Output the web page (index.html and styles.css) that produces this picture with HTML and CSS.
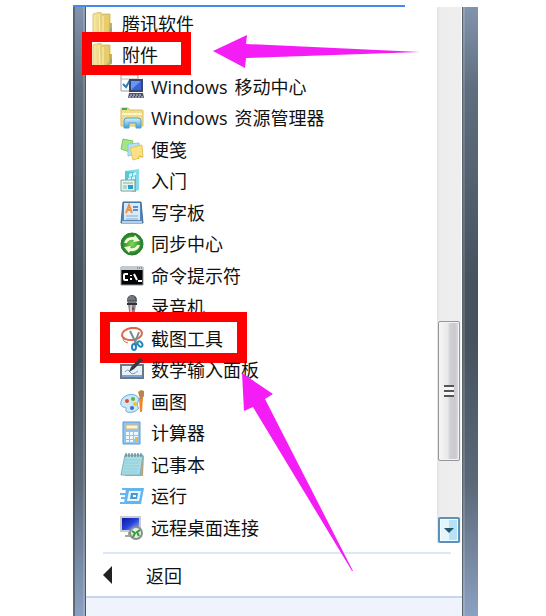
FILE: index.html
```html
<!DOCTYPE html>
<html lang="zh-CN">
<head>
    <meta charset="UTF-8">
    <meta name="viewport" content="width=device-width, initial-scale=1.0">
    <title>附件</title>
    <link rel="stylesheet" href="styles.css">
</head>
<body>
    <svg class="defs" aria-hidden="true">
        <defs>
            <linearGradient id="gold"><stop offset="0" stop-color="#f8eaa6"/><stop offset="1" stop-color="#d3b04a"/></linearGradient>
            <linearGradient id="screen" x2="1" y2="1"><stop offset="0" stop-color="#0a13a0"/><stop offset=".5" stop-color="#2540d8"/><stop offset="1" stop-color="#a9c4fa"/></linearGradient>
            <linearGradient id="sky" x2="0" y2="1"><stop offset="0" stop-color="#d8f2fc"/><stop offset="1" stop-color="#3a9fce"/></linearGradient>
            <radialGradient id="green"><stop offset="0" stop-color="#7bdc52"/><stop offset="1" stop-color="#1d7a24"/></radialGradient>
            <symbol id="folder" viewBox="0 0 24 24">
                <path d="M2 2l8-2v2h9v18l-7 4-10-2z" fill="url(#gold)" stroke="#dcc573"/>
                <path d="M11 3h7v16l-7 5z" fill="#e6cc6c"/>
                <path d="M8 2l1 20M12 4v18" stroke="#fff3b8" fill="none"/>
                <path d="M18 11h3v10l-6 2 3-4z" fill="#cfae44"/>
                <path d="M20 16v4" stroke="#52a7ba"/>
            </symbol>
        </defs>
    </svg>

    <div class="window">
        <div class="top-line"></div>
        <div class="side side-left"></div>
        <main class="menu">
            <div class="programs">
                <ul class="list">
                    <li class="folder">
                        <a href="#"><svg class="icon" viewBox="0 0 24 24"><use href="#folder"/></svg>腾讯软件</a>
                    </li>
                    <li class="folder">
                        <a href="#"><svg class="icon" viewBox="0 0 24 24"><use href="#folder"/></svg>附件</a>
                        <span class="mark mark-folder"></span>
                        <svg class="arrow arrow-folder" viewBox="0 0 207 33"><path d="M0 16L34 0l-1 9 174 8-174 6-1 10z"/></svg>
                    </li>
                    <li>
                        <a href="#"><svg class="icon" viewBox="0 0 24 24">
                            <path d="M1 0h17v16H1z" fill="#fff" stroke="#9aa0a6"/>
                            <path d="M1 4h17" stroke="#bbb"/>
                            <path d="M3 9l3 3 4-7" fill="none" stroke="#2b80b5" stroke-width="2"/>
                            <path d="M10 5h12v11H10z" fill="#6796f5" stroke="#38456e" stroke-width="2"/>
                            <path d="M11 15L21 6v9z" fill="#3863e0"/>
                            <path d="M9 18h14l1 5H8z" fill="#4a5268"/>
                            <path d="M10 20h12M9 22h14" stroke="#d4d8e4" stroke-dasharray="2 1"/>
                        </svg><span>Windows</span> 移动中心</a>
                    </li>
                    <li>
                        <a href="#"><svg class="icon" viewBox="0 0 24 24">
                            <path d="M1 3q0-1 1-1h6l2 2h12q1 0 1 1v15H1z" fill="#f1dc8c" stroke="#d7bd67"/>
                            <path d="M2 3h5" stroke="#50a847" stroke-width="2"/>
                            <path d="M2 8h20" stroke="#fff5c5" stroke-width="2"/>
                            <path d="M4 22V15q0-3 3-3h11q3 0 3 3v7h-5v-5H9v5z" fill="url(#sky)" stroke="#4fa3cb"/>
                        </svg><span>Windows</span> 资源管理器</a>
                    </li>
                    <li>
                        <a href="#"><svg class="icon" viewBox="0 0 24 24">
                            <path d="M3 1l10 2-3 11-9-3z" fill="#a4e58a" stroke="#7bca65"/>
                            <path d="M8 6l11-1 1 10-12 3z" fill="#b3e2f7" stroke="#86c5e6"/>
                            <path d="M10 10l12-3 1 12-10 3z" fill="#fae184" stroke="#e6c45b"/>
                            <path d="M18 21l1-3 4 1" fill="#fff2b6" stroke="#deb94c"/>
                        </svg>便笺</a>
                    </li>
                    <li>
                        <a href="#"><svg class="icon" viewBox="0 0 24 24">
                            <path d="M5 2l14-2v21l-6 2-8-3z" fill="#84dcea"/>
                            <path d="M5 2l11 1v20l-11-3z" fill="#58c7d9"/>
                            <path d="M9 5l3-1v3l-3 1zm4-1l3-1v3l-3 1zM8 9l3-1v3l-3 1zm4-1l3-1v3l-3 1z" fill="#d2f7fa"/>
                            <path d="M1 11h14v11H1z" fill="#e8f2ee" stroke="#76a69f"/>
                            <path d="M3 14h10M3 17h4M3 19h4" stroke="#80b89f"/>
                            <path d="M8 16h5v4H8z" fill="#23a1cf"/>
                        </svg>入门</a>
                    </li>
                    <li>
                        <a href="#"><svg class="icon" viewBox="0 0 24 24">
                            <path d="M3 1h18l2 21H1z" fill="#5587b8" stroke="#3d699a"/>
                            <path d="M4 2h16v17H4z" fill="#d7e9fa"/>
                            <path d="M6 12l3-8 3 8M7 9h4" fill="none" stroke="#f09137" stroke-width="2"/>
                            <path d="M13 6h5M13 9h5" stroke="#5b8fd1" stroke-width="2"/>
                            <path d="M6 15h12M6 18h12" stroke="#8da9c8"/>
                            <path d="M2 20h20v2H2z" fill="#b7d0e8"/>
                        </svg>写字板</a>
                    </li>
                    <li>
                        <a href="#"><svg class="icon" viewBox="0 0 24 24">
                            <circle cx="12" cy="12" r="11" fill="url(#green)" stroke="#297d32"/>
                            <path d="M4 11q2-7 10-6l1-2 5 6-7 1 1-2q-5-1-7 3z" fill="#f4fbdc"/>
                            <path d="M20 13q-2 7-10 6l-1 2-5-6 7-1-1 2q5 1 7-3z" fill="#f4fbdc"/>
                        </svg>同步中心</a>
                    </li>
                    <li>
                        <a href="#"><svg class="icon" viewBox="0 0 24 24">
                            <path d="M1 3h22v18H1z" fill="#050505" stroke="#8b949e"/>
                            <path d="M1 3h22v3H1z" fill="#bfcbd5"/>
                            <path d="M17 4h1m1 0h1m1 0h1" stroke="#4b5964"/>
                            <path d="M8 10H5q-1 0-1 1v4q0 1 1 1h3M11 11v1m0 2v2M14 10l3 6M18 17h4" fill="none" stroke="#fff" stroke-width="2"/>
                        </svg>命令提示符</a>
                    </li>
                    <li>
                        <a href="#"><svg class="icon" viewBox="0 0 24 24">
                            <path d="M8 9h8l-2 15h-4z" fill="#878b8f"/>
                            <path d="M10 9h2v15h-2z" fill="#c7c9cb"/>
                            <ellipse cx="12" cy="5" rx="5" ry="5" fill="#54585d"/>
                            <path d="M8 4h7M9 2h5M8 7h8" stroke="#93979c"/>
                            <path d="M7 9h10" stroke="#303438" stroke-width="2"/>
                            <path d="M13 12v3" stroke="#e22b22" stroke-width="2"/>
                        </svg>录音机</a>
                    </li>
                    <li>
                        <a href="#"><svg class="icon" viewBox="0 0 24 24">
                            <ellipse cx="12" cy="7" rx="10" ry="6" fill="none" stroke="#df6744" stroke-width="2" transform="rotate(-8 12 7)"/>
                            <path d="M4 10q-3 4 4 6" fill="none" stroke="#df6744"/>
                            <path d="M10 4l7 14M19 5l-5 13" stroke="#7c8a94" stroke-width="2"/>
                            <ellipse cx="14" cy="20" rx="2" ry="3" fill="none" stroke="#2585bd" stroke-width="2"/>
                            <ellipse cx="20" cy="17" rx="2" ry="3" fill="none" stroke="#2585bd" stroke-width="2" transform="rotate(-35 20 17)"/>
                        </svg>截图工具</a>
                        <span class="mark mark-tool"></span>
                        <svg class="arrow arrow-tool" viewBox="0 0 112 199"><path d="M0 0l31 21-8 5 88 172h-1L11 34l-9 4z"/></svg>
                    </li>
                    <li>
                        <a href="#"><svg class="icon" viewBox="0 0 24 24">
                            <path d="M1 7h22v13H1z" fill="#e9f1f8" stroke="#6c7885" stroke-width="2"/>
                            <path d="M2 18h20" stroke="#7aa5d0" stroke-width="2"/>
                            <path d="M5 14q3-4 5 0t8-1" fill="none" stroke="#8798a9"/>
                            <path d="M9 14l2-5 9-9 3 2-9 9z" fill="#333c45"/>
                        </svg>数学输入面板</a>
                    </li>
                    <li>
                        <a href="#"><svg class="icon" viewBox="0 0 24 24">
                            <path d="M2 9q5-6 13-4 5 2 3 7t1 6q-5 6-12 4-2-1-1-3t-3-2q-4-2-1-8z" fill="#cce7f8" stroke="#6faed7"/>
                            <circle cx="7" cy="11" r="2" fill="#e24b2b"/>
                            <circle cx="13" cy="9" r="2" fill="#58b83e"/>
                            <circle cx="15" cy="14" r="2" fill="#f2c22d"/>
                            <circle cx="12" cy="18" r="2" fill="#346fc4"/>
                            <path d="M19 8h4l-1 14h-2z" fill="#ee8827"/>
                            <path d="M18 2l3-2 3 1v5l-2 3h-2z" fill="#bd8450"/>
                        </svg>画图</a>
                    </li>
                    <li>
                        <a href="#"><svg class="icon" viewBox="0 0 24 24">
                            <path d="M3 1h17v22H3z" fill="#8fc5ee" stroke="#5c9acb"/>
                            <path d="M6 4h12v4H6z" fill="#fbf3df" stroke="#e8ae67"/>
                            <path d="M6 11h3v3H6zm4 0h3v3h-3zm4 0h4v3h-4zM6 15h3v3H6zm4 0h3v3h-3zm4 0h4v3h-4zM6 19h3v2H6zm4 0h3v2h-3z" fill="#edf8ff"/>
                            <path d="M15 16h3v5h-3z" fill="#f5ae50"/>
                        </svg>计算器</a>
                    </li>
                    <li>
                        <a href="#"><svg class="icon" viewBox="0 0 24 24">
                            <path d="M7 3h17l-1 20H5z" fill="#bba77c"/>
                            <path d="M5 2h18l-3 20H1z" fill="#a7dce5" stroke="#75b4c2"/>
                            <path d="M5 7h15M5 10h14M4 13h15M4 16h14M3 19h14" stroke="#93cdd9"/>
                            <path d="M6 0v4m3-4v4m3-4v4m3-4v4m3-4v4m3-4v4" stroke="#596971"/>
                        </svg>记事本</a>
                    </li>
                    <li>
                        <a href="#"><svg class="icon" viewBox="0 0 24 24">
                            <path d="M6 4h18l-3 16H4z" fill="#62b5f3"/>
                            <path d="M9 7h12l-2 10H7z" fill="#e9f7ff"/>
                            <path d="M11 9h7l-1 6h-7z" fill="#4799df"/>
                            <path d="M13 11h3v2h-3z" fill="#fff"/>
                            <path d="M2 5h5M0 10h6M1 14h5M0 19h5" stroke="#65b6f2" stroke-width="2"/>
                        </svg>运行</a>
                    </li>
                    <li>
                        <a href="#"><svg class="icon" viewBox="0 0 24 24">
                            <path d="M1 1h19v14H1z" fill="url(#screen)" stroke="#c9cdd1" stroke-width="2"/>
                            <path d="M8 16h6v3H8zM5 19h11v2H5z" fill="#a5a9ae"/>
                            <circle cx="16" cy="17" r="6" fill="#e8e9e8" stroke="#8b8f8f" stroke-width="2"/>
                            <path d="M12 15l3 2-2 4M20 14l-3 2 2 4" fill="none" stroke="#28a32b" stroke-width="2"/>
                        </svg>远程桌面连接</a>
                    </li>
                </ul>
                <div class="scrollbar">
                    <div class="thumb"><span class="grip"></span></div>
                    <button class="scroll-down" aria-label="向下滚动"></button>
                </div>
            </div>
            <button class="back"><span class="back-arrow"></span>返回</button>
            <div class="footer"></div>
        </main>
        <div class="side side-right"></div>
    </div>
</body>
</html>
```

FILE: styles.css
```css
* {
    box-sizing: border-box;
}
body {
    margin: 0;
    background: #fff;
    color: #111;
    font-family: "Open Sans", "Noto Sans CJK SC", sans-serif;
    font-size: 18px;
}
.defs {
    position: absolute;
    width: 0;
    height: 0;
}
.window {
    display: grid;
    grid-template-columns: 13px 1fr 16px;
    grid-template-rows: auto 1fr;
    min-height: 100vh;
    padding: 5px 68px 0 73px;
}
.top-line {
    grid-column: 1 / -1;
    width: 82%;
    height: 2px;
    background: #438be9;
}
.side {
    background: linear-gradient(#8294ad, #5f6f80 13%, #46525e 45%, #46525e 55%, #5a6878 78%, #8ba1c2);
}
.side-left {
    border-left: 2px solid rgba(50, 60, 70, 0.5);
    border-right: 1px solid #4d5762;
    box-shadow: inset -2px 0 rgba(255, 255, 255, 0.15);
}
.side-right {
    border-left: 1px solid #59636b;
    box-shadow: inset 2px 0 rgba(255, 255, 255, 0.15);
}
.menu {
    display: flex;
    flex-direction: column;
    min-width: 0;
}
.programs {
    display: flex;
}
.list {
    flex: 1;
    margin: 0;
    padding: 1px 0 0;
    list-style: none;
}
.list li {
    position: relative;
    height: 31px;
    padding-left: 34px;
}
.list li:nth-child(even) {
    height: 32px;
}
.list li.folder {
    padding-left: 5px;
}
.list a {
    display: flex;
    align-items: center;
    gap: 7px;
    height: 100%;
    color: inherit;
    line-height: 24px;
    text-decoration: none;
    white-space: nowrap;
}
.icon {
    flex: none;
    width: 24px;
    height: 24px;
}

/* highlights over the list */
.mark {
    position: absolute;
    border: 10px solid #fe0000;
}
.mark-folder {
    left: -4px;
    top: -7px;
    width: 109px;
    height: 43px;
}
.mark-tool {
    left: 14px;
    top: -11px;
    width: 147px;
    height: 51px;
}
.arrow {
    position: absolute;
    z-index: 1;
    fill: #f51df5;
}
.arrow-folder {
    left: 127px;
    top: -4px;
    width: 207px;
    height: 33px;
}
.arrow-tool {
    left: 156px;
    top: 50px;
    width: 112px;
    height: 199px;
}

.scrollbar {
    display: grid;
    grid-template-rows: 314fr 140px 56fr 26px;
    width: 24px;
    margin-right: 1px;
    padding: 0 1px;
    background: linear-gradient(90deg, #e4e4e4, #eee 4px);
}
.thumb {
    grid-row: 2;
    display: flex;
    align-items: center;
    justify-content: center;
    border: 1px solid #96969a;
    border-radius: 2px;
    background: linear-gradient(90deg, #f6f6f6, #e8e8e9 45%, #cfcfd4 55%, #c9c9cf 80%, #dedee2);
    box-shadow: inset 0 0 0 1px #f4f4f4;
}
.grip {
    width: 10px;
    height: 12px;
    background: repeating-linear-gradient(#555 0 2px, #f5f5f5 2px 5px);
}
.scroll-down {
    grid-row: 4;
    display: flex;
    align-items: center;
    justify-content: center;
    padding: 0;
    border: 2px solid #5a92bd;
    border-radius: 2px;
    background: linear-gradient(90deg, #e4f5fc 50%, #b6e2f6 50%);
    box-shadow: inset 0 0 0 1px #f2fbff;
}
.scroll-down::before {
    content: "";
    border: 5px solid transparent;
    border-top: 5px solid #23586f;
    border-bottom: 0;
}
.back {
    display: flex;
    align-items: center;
    gap: 34px;
    height: 44px;
    margin: 9px 11px 0 17px;
    padding: 0;
    border: 0;
    border-top: 2px solid #dbe9f7;
    background: none;
    color: inherit;
    font: inherit;
}
.back-arrow {
    border: 9px solid transparent;
    border-left: 0;
    border-right: 9px solid #222;
}
.footer {
    flex: 1;
    border-top: 2px solid #c9d6e7;
    background: #eff3fb;
}
```
